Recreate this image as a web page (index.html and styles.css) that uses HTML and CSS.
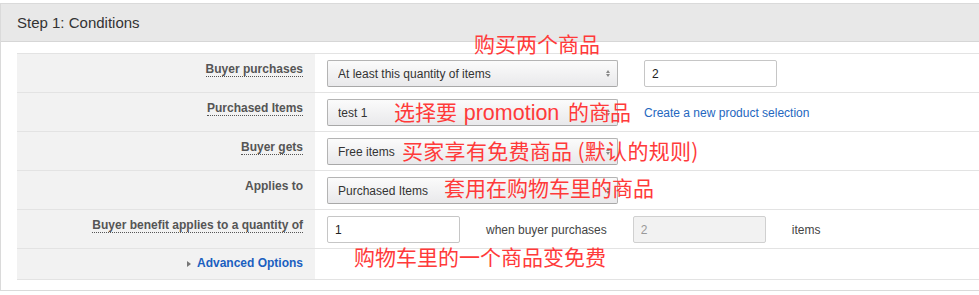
FILE: index.html
```html
<!DOCTYPE html>
<html lang="en">
<head>
    <meta charset="UTF-8">
    <meta name="viewport" content="width=device-width, initial-scale=1.0">
    <title>Step 1: Conditions</title>
    <link rel="stylesheet" href="styles.css">
</head>
<body>
    <div class="page">
        <div class="panel">
            <div class="panel-head">Step 1: Conditions</div>

            <div class="panel-body">
                <table class="form-table">
                    <tr>
                        <td class="label"><span class="hint">Buyer purchases</span></td>
                        <td class="field">
                            <div class="controls">
                                <span class="select-wrap">
                                    <select class="select">
                                        <option>At least this quantity of items</option>
                                    </select>
                                </span>
                                <input class="text-input" type="text" value="2">
                            </div>
                        </td>
                    </tr>
                    <tr>
                        <td class="label"><span class="hint">Purchased Items</span></td>
                        <td class="field">
                            <div class="controls">
                                <span class="select-wrap">
                                    <select class="select">
                                        <option>test 1</option>
                                    </select>
                                </span>
                                <a class="link" href="#">Create a new product selection</a>
                            </div>
                        </td>
                    </tr>
                    <tr>
                        <td class="label"><span class="hint">Buyer gets</span></td>
                        <td class="field">
                            <div class="controls">
                                <span class="select-wrap">
                                    <select class="select">
                                        <option>Free items</option>
                                    </select>
                                </span>
                            </div>
                        </td>
                    </tr>
                    <tr>
                        <td class="label"><span>Applies to</span></td>
                        <td class="field">
                            <div class="controls">
                                <span class="select-wrap">
                                    <select class="select">
                                        <option>Purchased Items</option>
                                    </select>
                                </span>
                            </div>
                        </td>
                    </tr>
                    <tr>
                        <td class="label"><span class="hint">Buyer benefit applies to a quantity of</span></td>
                        <td class="field">
                            <div class="controls">
                                <input class="text-input" type="text" value="1">
                                <span class="plain">when buyer purchases</span>
                                <input class="text-input" type="text" value="2" disabled>
                                <span class="plain">items</span>
                            </div>
                        </td>
                    </tr>
                    <tr class="last-row">
                        <td class="label"><a class="advanced" href="#"><span class="arrow"></span>Advanced Options</a></td>
                        <td class="field"></td>
                    </tr>
                </table>
            </div>
        </div>

        <!-- 说明文字 (红色标注) -->
        <div class="note note-1">购买两个商品</div>
        <div class="note note-2">选择要 <span class="latin">promotion</span> 的商品</div>
        <div class="note note-3">买家享有免费商品 (默认的规则)</div>
        <div class="note note-4">套用在购物车里的商品</div>
        <div class="note note-5">购物车里的一个商品变免费</div>
    </div>
</body>
</html>
```

FILE: styles.css
```css
body {
    margin: 0;
    font-family: "Liberation Sans", Arial, sans-serif;
    font-size: 12px;
    color: #333;
    background: #fff;
    overflow: hidden;
}
.page {
    position: relative;
    padding-top: 3px;
}
.panel {
    border: 1px solid #dadada;
    border-right: none;
}
.panel-head {
    background-color: #e8e8e8;
    border-bottom: 1px solid #d6d6d6;
    padding: 10px 16px;
    font-size: 15px;
    line-height: 17px;
    color: #333;
}
.panel-body {
    padding: 11px 0 10px 16px;
}
.form-table {
    width: 100%;
    border-collapse: collapse;
}
.form-table td {
    border-top: 1px solid #e3e3e3;
    border-bottom: 1px solid #e3e3e3;
    vertical-align: top;
    padding: 6px 0 5px 12px;
}
.form-table .label {
    width: 298px;
    box-sizing: border-box;
    background-color: #f2f2f2;
    text-align: right;
    padding-right: 12px;
    font-weight: bold;
    color: #555;
    line-height: 14px;
}
.label span {
    display: inline-block;
    margin-top: 2px;
}
.hint {
    border-bottom: 1px dotted #555;
}
.last-row td {
    padding-top: 7px;
    padding-bottom: 9px;
    height: 14px;
}
.controls {
    display: flex;
    align-items: center;
    gap: 26px;
    height: 27px;
}
.select-wrap {
    position: relative;
    display: inline-block;
}
.select-wrap::before,
.select-wrap::after {
    content: "";
    position: absolute;
    right: 8px;
    border-left: 2px solid transparent;
    border-right: 2px solid transparent;
    pointer-events: none;
}
.select-wrap::before {
    top: 10px;
    border-bottom: 3px solid #888;
}
.select-wrap::after {
    top: 14px;
    border-top: 3px solid #888;
}
.select {
    -webkit-appearance: none;
    appearance: none;
    width: 291px;
    height: 27px;
    box-sizing: border-box;
    padding: 0 20px 0 10px;
    border: 1px solid #b4b4b4;
    border-bottom-color: #a8a8a8;
    border-radius: 2px;
    background: linear-gradient(#fbfbfb, #e9e9eb);
    font-family: "Liberation Sans", Arial, sans-serif;
    font-size: 12px;
    color: #333;
    display: block;
}
.text-input {
    width: 133px;
    height: 27px;
    box-sizing: border-box;
    padding: 0 7px;
    border: 1px solid #c6c6c6;
    border-radius: 2px;
    font-family: "Liberation Sans", Arial, sans-serif;
    font-size: 12px;
    color: #222;
    background: #fff;
}
.text-input:disabled {
    background-color: #f2f2f2;
    border-color: #d0d0d0;
    color: #999;
}
.plain {
    color: #444;
}
.link {
    color: #2467c0;
    text-decoration: none;
}
.advanced {
    color: #1a5fc0;
    text-decoration: none;
}
.arrow {
    display: inline-block;
    width: 0;
    height: 0;
    border-top: 3px solid transparent;
    border-bottom: 3px solid transparent;
    border-left: 4px solid #777;
    margin: 0 6px 1px 0;
    vertical-align: middle;
}
.note {
    position: absolute;
    font-family: "Noto Sans CJK SC", sans-serif;
    font-size: 21px;
    line-height: 21px;
    color: #ff3a3a;
    white-space: nowrap;
}
.note .latin {
    font-family: "Liberation Sans", Arial, sans-serif;
    font-size: 21.5px;
    margin-left: 2px;
    margin-right: 4px;
}
.note-1 { left: 474px; top: 33px; }
.note-2 { left: 394px; top: 101px; }
.note-3 { left: 402px; top: 140px; letter-spacing: 0.3px; }
.note-4 { left: 444px; top: 177px; }
.note-5 { left: 354px; top: 246px; }
```
